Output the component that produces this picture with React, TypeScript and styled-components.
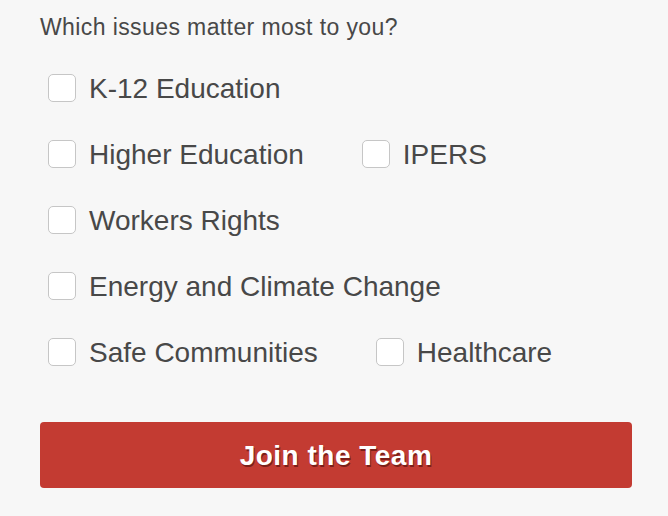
import styled, { createGlobalStyle } from 'styled-components';

const GlobalStyle = createGlobalStyle`
  html, body {
    margin: 0;
    padding: 0;
    background: #f7f7f7;
  }
  body {
    font-family: "Liberation Sans", Arial, Helvetica, sans-serif;
    color: #484848;
  }
`;

const issueRows: string[][] = [
  ['K-12 Education'],
  ['Higher Education', 'IPERS'],
  ['Workers Rights'],
  ['Energy and Climate Change'],
  ['Safe Communities', 'Healthcare'],
];

function App() {
  return (
    <>
      <GlobalStyle />
      <Form onSubmit={(e) => e.preventDefault()}>
        <Question>Which issues matter most to you?</Question>
        <Options>
          {issueRows.map((row, i) => (
            <Row key={i}>
              {row.map((issue) => (
                <Option key={issue}>
                  <Box type="checkbox" name="issues" value={issue} />
                  <Label>{issue}</Label>
                </Option>
              ))}
            </Row>
          ))}
        </Options>
        <JoinButton type="submit">Join the Team</JoinButton>
      </Form>
    </>
  );
}

const Form = styled.form`
  display: flex;
  flex-direction: column;
  padding: 14px 36px 0 40px;
  width: 668px;
  box-sizing: border-box;
`;

const Question = styled.h2`
  margin: 0;
  font-size: 23px;
  line-height: 26px;
  font-weight: 400;
  letter-spacing: 0.4px;
  color: #484848;
`;

const Options = styled.div`
  display: flex;
  flex-direction: column;
  margin-top: 15px;
`;

const Row = styled.div`
  display: flex;
  align-items: center;
  height: 66px;
  padding-left: 8px;
`;

const Option = styled.label`
  display: flex;
  align-items: center;
  gap: 13px;
  margin-right: 58px;
  cursor: pointer;
`;

const Box = styled.input`
  appearance: none;
  -webkit-appearance: none;
  margin: 0;
  width: 28px;
  height: 28px;
  box-sizing: border-box;
  border: 1px solid #c6c6c6;
  border-radius: 5px;
  background: #ffffff;
  flex-shrink: 0;
  cursor: pointer;
`;

const Label = styled.span`
  font-size: 28px;
  line-height: 32px;
  padding-top: 2px;
  color: #484848;
`;

const JoinButton = styled.button`
  margin-top: 37px;
  height: 66px;
  width: 592px;
  border: none;
  border-radius: 4px;
  background: #c33b32;
  color: #ffffff;
  font-family: "Liberation Sans", Arial, Helvetica, sans-serif;
  font-size: 28px;
  font-weight: 700;
  letter-spacing: 0.5px;
  padding-top: 2px;
  text-shadow: 1px 2px 0 #7c1f19;
  cursor: pointer;
`;

export default App;
